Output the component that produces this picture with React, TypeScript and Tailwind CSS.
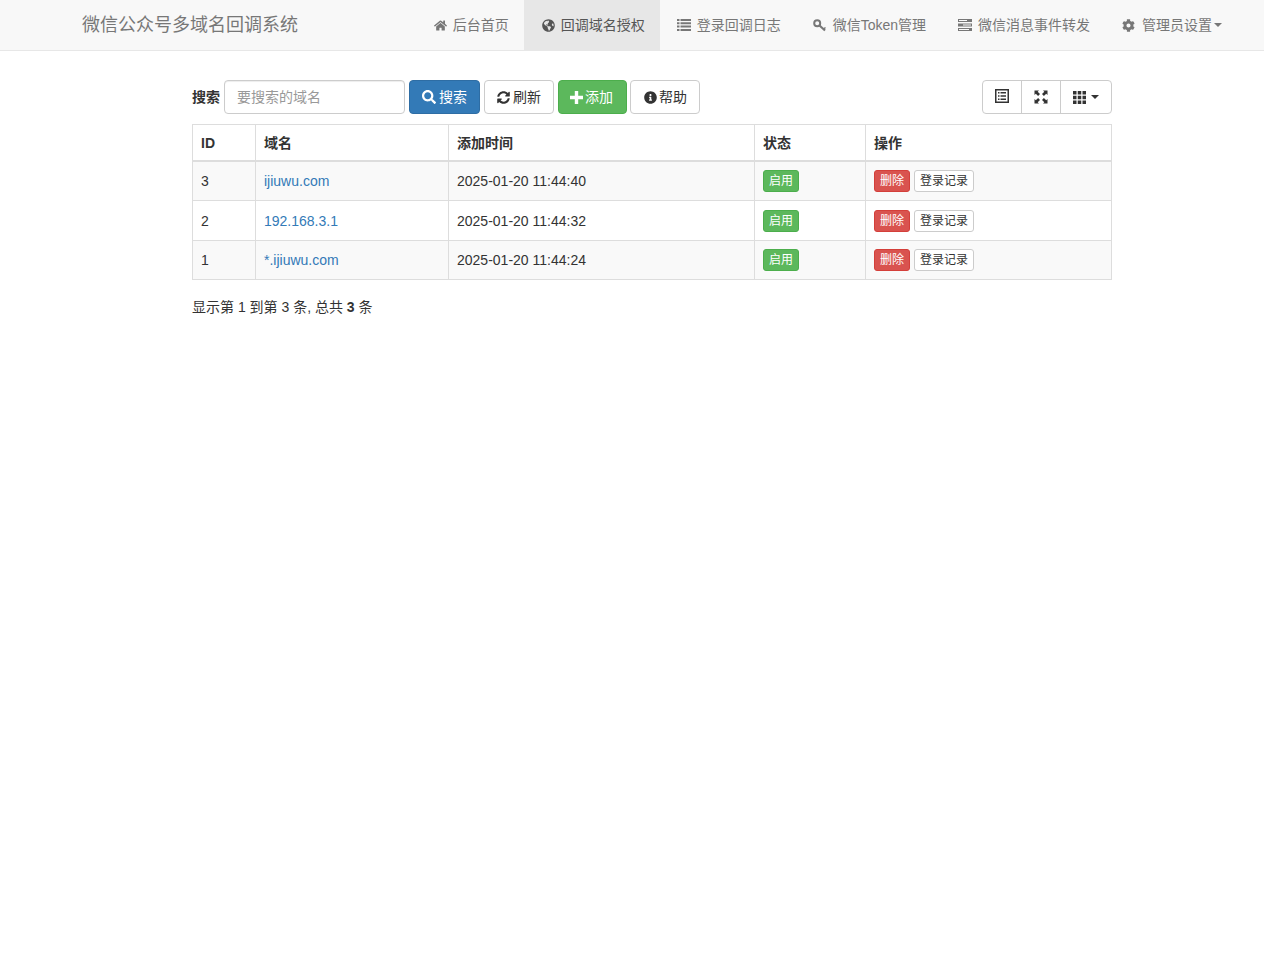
import { FaCog, FaGlobeAmericas, FaHome, FaInfoCircle, FaSearch, FaSyncAlt } from "react-icons/fa";

const FONT = "font-['Helvetica_Neue','Liberation_Sans','Noto_Sans_CJK_SC',sans-serif]";

function ListIcon() {
  return (
    <svg width="14" height="12" viewBox="0 0 14 12" fill="currentColor">
      <path d="M0 0h2.500v2H0zM3.500 0H14v2H3.500zM0 3.300h2.500v2H0zM3.500 3.300H14v2H3.500zM0 6.600h2.500v2H0zM3.500 6.600H14v2H3.500zM0 10h2.500v2H0zM3.500 10H14v2H3.500z" />
    </svg>
  );
}

function KeyIcon() {
  return (
    <svg width="14" height="13" viewBox="0 0 14 13" fill="none" stroke="currentColor">
      <circle cx="4.200" cy="4.200" r="3" strokeWidth="2" />
      <path d="M6.500 6.500 12 11.500" strokeWidth="2.200" />
      <path d="M10.500 10 12.500 8.500" strokeWidth="1.500" />
    </svg>
  );
}

function TasksIcon() {
  return (
    <svg width="14" height="12" viewBox="0 0 14 12" fill="currentColor">
      <path d="M0 0h14v3H0zM1 1v1h8V1zM0 4.500h14v3H0zM5 5.500v1h8v-1zM0 9h14v3H0zM1 10v1h10v-1z" fillRule="evenodd" />
    </svg>
  );
}

function ListAltIcon() {
  return (
    <svg width="14" height="14" viewBox="0 0 14 14" fill="currentColor">
      <path fillRule="evenodd" d="M0 0h14v14H0zM1.500 1.500v11h11v-11zM3 3h1.500v1.500H3zM5.500 3H11v1.500H5.500zM3 6.200h1.500v1.500H3zM5.500 6.200H11v1.500H5.500zM3 9.500h1.500V11H3zM5.500 9.500H11V11H5.500z" />
    </svg>
  );
}

function FullscreenIcon() {
  return (
    <svg width="14" height="14" viewBox="0 0 14 14" fill="currentColor">
      <path d="M0.500 0.500h4.500L3.700 1.800 6 4.100 4.100 6 1.800 3.700 0.500 5zM13.500 0.500V5L12.200 3.700 9.900 6 8 4.100 10.300 1.800 9 0.500zM0.500 13.500V9l1.300 1.300L4.100 8 6 9.900 3.700 12.200 5 13.500zM13.500 13.500H9l1.300-1.300L8 9.900 9.900 8 12.200 10.300 13.500 9z" />
    </svg>
  );
}

function ThIcon() {
  return (
    <svg width="13" height="13" viewBox="0 0 13 13" fill="currentColor">
      <path d="M0 0h3.500v3.500H0zM4.750 0h3.500v3.500h-3.500zM9.500 0H13v3.500H9.500zM0 4.750h3.500v3.500H0zM4.750 4.750h3.500v3.500h-3.500zM9.500 4.750H13v3.500H9.500zM0 9.500h3.500V13H0zM4.750 9.500h3.500V13h-3.500zM9.500 9.500H13V13H9.500z" />
    </svg>
  );
}

function PlusIcon() {
  return (
    <svg width="13" height="13" viewBox="0 0 13 13" fill="currentColor">
      <path d="M4.800 0h3.400v4.800H13v3.400H8.200V13H4.800V8.200H0V4.800h4.800z" />
    </svg>
  );
}

const NAV = [
  { icon: <FaHome size={13} />, label: "后台首页", inset: "pl-[3px]" },
  { icon: <FaGlobeAmericas size={13} />, label: "回调域名授权", active: true, inset: "pl-[3px]" },
  { icon: <ListIcon />, label: "登录回调日志", inset: "pl-[2px]" },
  { icon: <KeyIcon />, label: "微信Token管理", inset: "pl-[2px]" },
  { icon: <TasksIcon />, label: "微信消息事件转发", inset: "pl-[2px]" },
  { icon: <FaCog size={13} />, label: "管理员设置", caret: true, inset: "pl-[2px]" },
];

const ROWS = [
  { id: 3, domain: "ijiuwu.com", time: "2025-01-20 11:44:40" },
  { id: 2, domain: "192.168.3.1", time: "2025-01-20 11:44:32" },
  { id: 1, domain: "*.ijiuwu.com", time: "2025-01-20 11:44:24" },
];

export default function App() {
  return (
    <div className={`min-h-[959px] bg-white text-sm leading-5 text-[#333] ${FONT}`}>
      <nav className="flex h-[51px] items-stretch justify-between border-b border-[#e7e7e7] bg-[#f8f8f8] pr-[27px] pl-[82px]">
        <a className="text-lg leading-[50px] text-[#777]">微信公众号多域名回调系统</a>
        <ul className="flex">
          {NAV.map((n) => (
            <li
              key={n.label}
              className={`flex items-center px-[15px] ${n.active ? "bg-[#e7e7e7] text-[#555]" : "text-[#777]"}`}
            >
              <span className={`flex w-[22px] ${n.inset}`}>{n.icon}</span>
              <span>{n.label}</span>
              {n.caret && <span className="ml-[2px] h-0 w-0 border-x-4 border-t-4 border-x-transparent border-t-[#777]" />}
            </li>
          ))}
        </ul>
      </nav>

      <main className="ml-[192px] w-[920px] pt-[29px]">
        <div className="mb-[10px] flex items-center">
          <label className="mr-1 font-bold">搜索</label>
          <input
            className="mr-1 h-[34px] w-[181px] rounded border border-[#ccc] px-3 text-sm text-[#555] shadow-[inset_0_1px_1px_rgba(0,0,0,0.075)] outline-none placeholder:text-[#999]"
            placeholder="要搜索的域名"
          />
          <button className="mr-1 flex h-[34px] w-[71px] items-center rounded border border-[#2e6da4] bg-[#337ab7] pl-3 text-white">
            <span className="w-[17px]"><FaSearch size={14} /></span>
            搜索
          </button>
          <button className="mr-1 flex h-[34px] w-[70px] items-center rounded border border-[#ccc] bg-white pl-3">
            <span className="w-4"><FaSyncAlt size={13} /></span>
            刷新
          </button>
          <button className="mr-[3px] flex h-[34px] w-[69px] items-center rounded border border-[#4cae4c] bg-[#5cb85c] pl-[11px] text-white">
            <span className="w-[15px]"><PlusIcon /></span>
            添加
          </button>
          <button className="flex h-[34px] w-[70px] items-center rounded border border-[#ccc] bg-white pl-[13px]">
            <span className="w-[15px]"><FaInfoCircle size={13} /></span>
            帮助
          </button>
          <div className="ml-auto flex h-[34px] w-[130px] rounded border border-[#ccc] bg-white">
            <button className="flex w-[39px] items-center justify-center border-r border-[#ccc] pb-[2px]">
              <ListAltIcon />
            </button>
            <button className="flex w-[39px] items-center justify-center border-r border-[#ccc]">
              <FullscreenIcon />
            </button>
            <button className="flex flex-1 items-center justify-center gap-[5px]">
              <ThIcon />
              <span className="h-0 w-0 border-x-4 border-t-4 border-x-transparent border-t-[#333]" />
            </button>
          </div>
        </div>

        <table className="w-[920px] table-fixed border-collapse border border-[#ddd]">
          <colgroup>
            <col className="w-[63px]" />
            <col className="w-[193px]" />
            <col className="w-[306px]" />
            <col className="w-[111px]" />
            <col />
          </colgroup>
          <thead>
            <tr>
              {["ID", "域名", "添加时间", "状态", "操作"].map((h) => (
                <th key={h} className="border border-b-2 border-[#ddd] px-2 pt-2 pb-[7px] text-left font-bold">
                  {h}
                </th>
              ))}
            </tr>
          </thead>
          <tbody>
            {ROWS.map((r, i) => (
              <tr key={r.id} className={i % 2 === 0 ? "bg-[#f9f9f9]" : "h-10"}>
                <td className="border border-[#ddd] p-2">{r.id}</td>
                <td className="border border-[#ddd] p-2 text-[#337ab7]">{r.domain}</td>
                <td className="border border-[#ddd] p-2">{r.time}</td>
                <td className="border border-[#ddd] p-2">
                  <span className="block h-[22px] w-9 rounded-[3px] border border-[#4cae4c] bg-[#5cb85c] text-center text-xs leading-[20px] text-white">
                    启用
                  </span>
                </td>
                <td className="border border-[#ddd] p-2">
                  <div className="flex gap-1">
                    <span className="h-[22px] w-9 rounded-[3px] border border-[#d43f3a] bg-[#d9534f] text-center text-xs leading-[20px] text-white">
                      删除
                    </span>
                    <span className="h-[22px] w-[60px] rounded-[3px] border border-[#ccc] bg-white text-center text-xs leading-[20px]">
                      登录记录
                    </span>
                  </div>
                </td>
              </tr>
            ))}
          </tbody>
        </table>

        <p className="mt-[17px]">
          显示第 1 到第 3 条, 总共 <b>3</b> 条
        </p>
      </main>
    </div>
  );
}
